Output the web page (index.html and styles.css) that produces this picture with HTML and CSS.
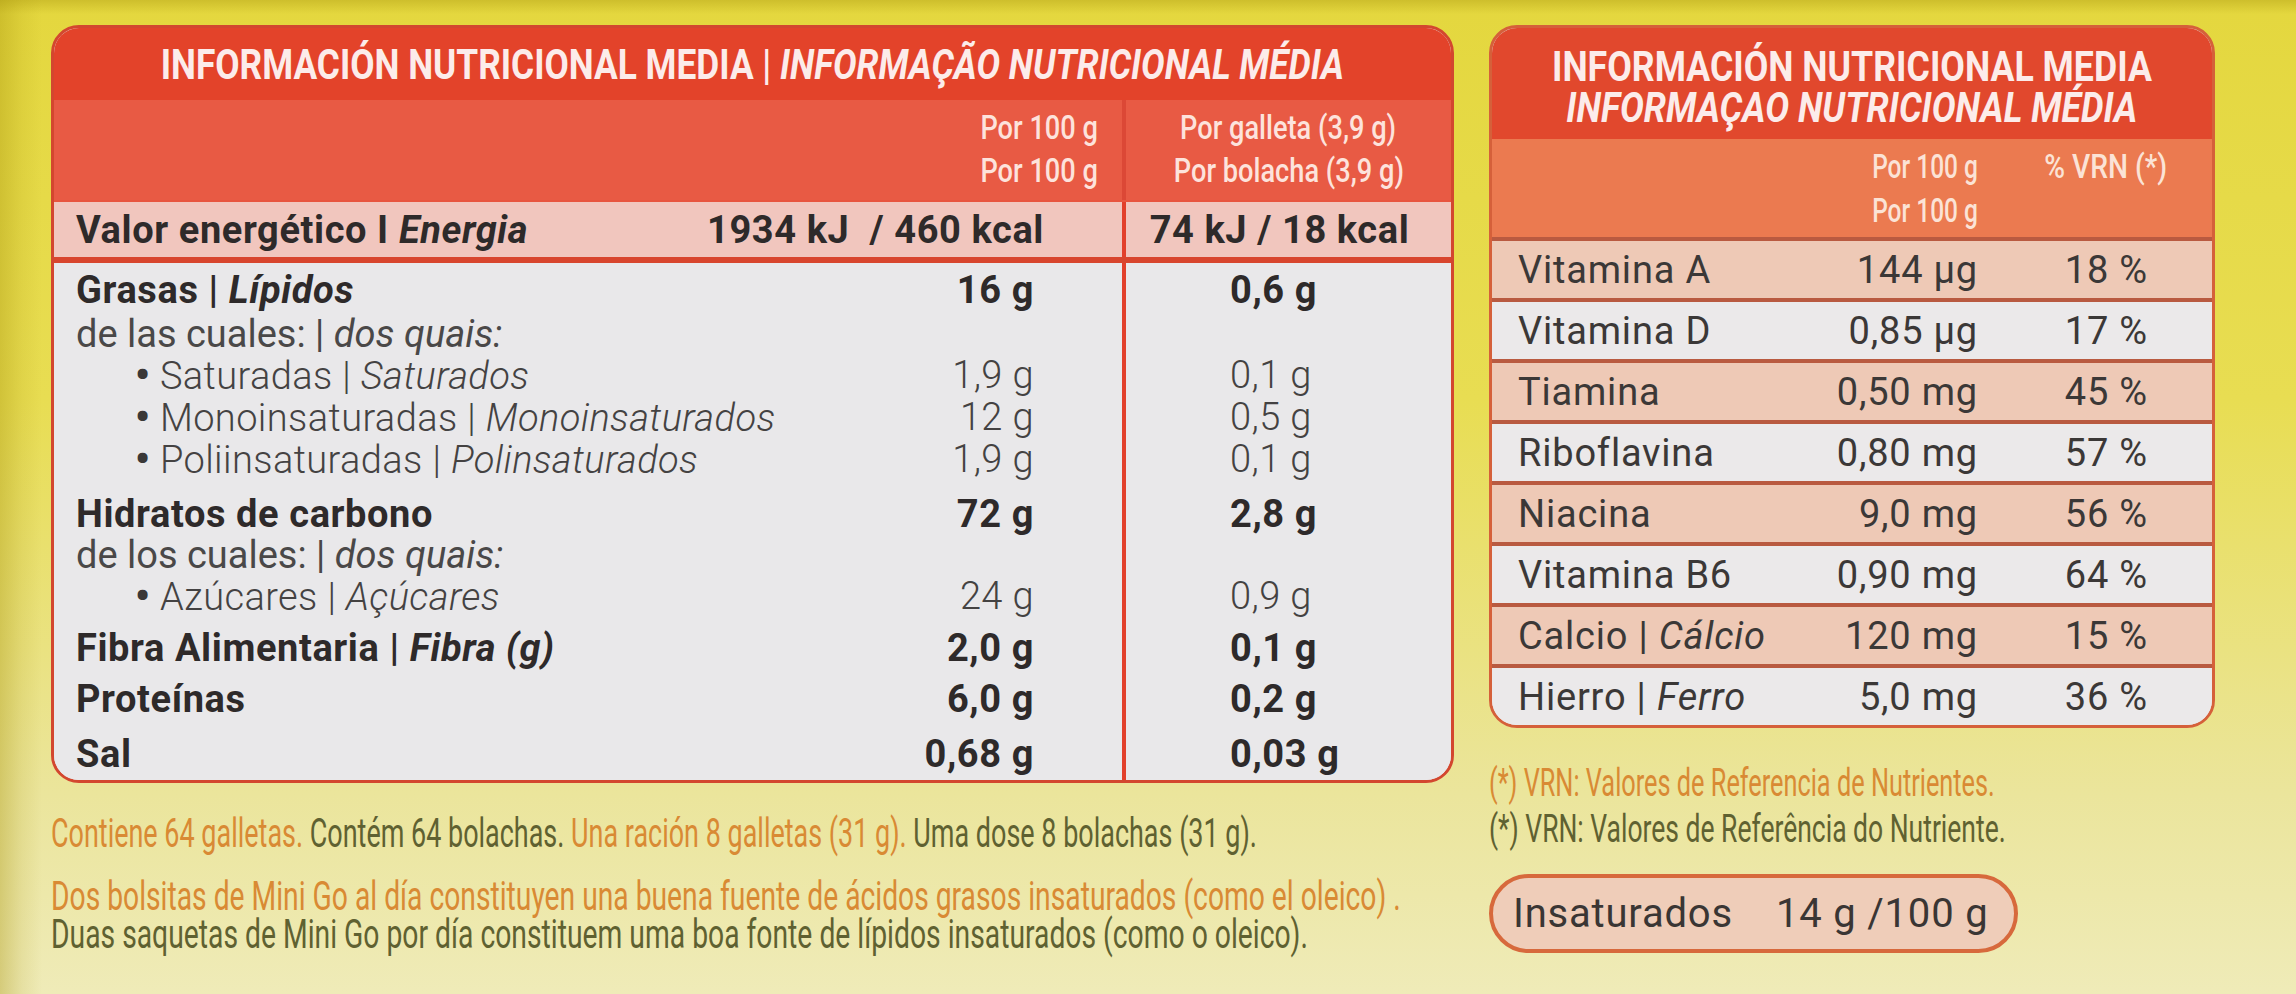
FILE: index.html
```html
<!DOCTYPE html>
<html lang="es">
<head>
<meta charset="utf-8">
<title>Información nutricional</title>
<link rel="stylesheet" href="styles.css">
</head>
<body>
<div class="pack">
  <div class="col-left">
    <section class="lt">
      <div class="lt-title"><span class="ttl">INFORMACIÓN NUTRICIONAL MEDIA | <i>INFORMAÇÃO NUTRICIONAL MÉDIA</i></span></div>
      <div class="lt-head">
        <div class="lh1">
          <div class="hl"><span>Por 100 g</span></div>
          <div class="hl"><span>Por 100 g</span></div>
        </div>
        <div class="lh2">
          <div class="hl"><span>Por galleta (3,9 g)</span></div>
          <div class="hl"><span>Por bolacha (3,9 g)</span></div>
        </div>
      </div>
      <div class="lt-energy">
        <div class="e1"><span>Valor energético I <i>Energia</i></span><span>1934 kJ &nbsp;/ 460 kcal</span></div>
        <div class="e2">74 kJ / 18 kcal</div>
      </div>
      <div class="lt-body">
        <div class="r b"><span class="l">Grasas | <i>Lípidos</i></span><span class="v1">16 g</span><span></span><span class="v2">0,6 g</span></div>
        <div class="r s p3"><span class="l">de las cuales: | <i>dos quais:</i></span></div>
        <div class="r t"><span class="l"><span class="bu">•</span> Saturadas | <i>Saturados</i></span><span class="v1">1,9 g</span><span></span><span class="v2">0,1 g</span></div>
        <div class="r t"><span class="l"><span class="bu">•</span> Monoinsaturadas | <i>Monoinsaturados</i></span><span class="v1">12 g</span><span></span><span class="v2">0,5 g</span></div>
        <div class="r t"><span class="l"><span class="bu">•</span> Poliinsaturadas | <i>Polinsaturados</i></span><span class="v1">1,9 g</span><span></span><span class="v2">0,1 g</span></div>
        <div class="r b p13"><span class="l">Hidratos de carbono</span><span class="v1">72 g</span><span></span><span class="v2">2,8 g</span></div>
        <div class="r s"><span class="l">de los cuales: | <i>dos quais:</i></span></div>
        <div class="r t"><span class="l"><span class="bu">•</span> Azúcares | <i>Açúcares</i></span><span class="v1">24 g</span><span></span><span class="v2">0,9 g</span></div>
        <div class="r b p10"><span class="l">Fibra Alimentaria | <i>Fibra (g)</i></span><span class="v1">2,0 g</span><span></span><span class="v2">0,1 g</span></div>
        <div class="r b p10"><span class="l">Proteínas</span><span class="v1">6,0 g</span><span></span><span class="v2">0,2 g</span></div>
        <div class="r b p14"><span class="l">Sal</span><span class="v1">0,68 g</span><span></span><span class="v2">0,03 g</span></div>
      </div>
    </section>
    <div class="notes">
      <div class="nl n1"><span class="nx"><span class="or">Contiene 64 galletas.</span> <span class="ol">Contém 64 bolachas.</span> <span class="or">Una ración 8 galletas (31 g).</span> <span class="ol">Uma dose 8 bolachas (31 g).</span></span></div>
      <div class="nl n2"><span class="nx"><span class="or">Dos bolsitas de Mini Go al día constituyen una buena fuente de ácidos grasos insaturados (como el oleico) .</span></span></div>
      <div class="nl n3"><span class="nx"><span class="ol">Duas saquetas de Mini Go por día constituem uma boa fonte de lípidos insaturados (como o oleico).</span></span></div>
    </div>
  </div>

  <div class="col-right">
    <section class="rt">
      <div class="rt-title">
        <div><span>INFORMACIÓN NUTRICIONAL MEDIA</span></div>
        <div><span><i>INFORMAÇAO NUTRICIONAL MÉDIA</i></span></div>
      </div>
      <div class="rt-head">
        <div></div>
        <div class="rh">
          <div class="hl"><span>Por 100 g</span></div>
          <div class="hl"><span>Por 100 g</span></div>
        </div>
        <div class="rh rh2">
          <div class="hl"><span>% VRN (*)</span></div>
        </div>
      </div>
      <div class="rr pk"><span class="n">Vitamina A</span><span class="v">144 µg</span><span class="p">18 %</span></div>
      <div class="rr wh"><span class="n">Vitamina D</span><span class="v">0,85 µg</span><span class="p">17 %</span></div>
      <div class="rr pk"><span class="n">Tiamina</span><span class="v">0,50 mg</span><span class="p">45 %</span></div>
      <div class="rr wh"><span class="n">Riboflavina</span><span class="v">0,80 mg</span><span class="p">57 %</span></div>
      <div class="rr pk"><span class="n">Niacina</span><span class="v">9,0 mg</span><span class="p">56 %</span></div>
      <div class="rr wh"><span class="n">Vitamina B6</span><span class="v">0,90 mg</span><span class="p">64 %</span></div>
      <div class="rr pk"><span class="n">Calcio | <i>Cálcio</i></span><span class="v">120 mg</span><span class="p">15 %</span></div>
      <div class="rr wh"><span class="n">Hierro | <i>Ferro</i></span><span class="v">5,0 mg</span><span class="p">36 %</span></div>
    </section>
    <div class="fn">
      <div class="f1"><span class="or">(*) VRN: Valores de Referencia de Nutrientes.</span></div>
      <div class="f2"><span class="ol">(*) VRN: Valores de Referência do Nutriente.</span></div>
    </div>
    <div class="pill"><span class="k">Insaturados</span><span>14 g /100 g</span></div>
  </div>
</div>
</body>
</html>
```

FILE: styles.css
```css
* { box-sizing: border-box; margin: 0; padding: 0; }
html, body { width: 2296px; height: 994px; overflow: hidden; }
body {
  font-family: Roboto, "Liberation Sans", sans-serif;
  background:
    linear-gradient(to right, rgba(165, 145, 10, 0.35) 0, rgba(165, 145, 10, 0.12) 22px, rgba(165, 145, 10, 0) 42px),
    linear-gradient(to bottom, rgba(165, 145, 10, 0.35) 0, rgba(165, 145, 10, 0) 14px),
    linear-gradient(to bottom, #e4d73e 0%, #e8dd52 40%, #ebe59c 80%, #efebb8 100%);
}
i { font-style: italic; }

.pack { display: flex; gap: 35px; padding: 25px 0 0 51px; }
.col-left { width: 1403px; }
.col-right { width: 726px; }

/* ---------- left table ---------- */
.lt {
  border: 3px solid #d3472f;
  border-radius: 28px;
  overflow: hidden;
  background: #e9e8ea;
}
.lt-title {
  height: 72px;
  background: #e3432a;
  display: flex;
  align-items: center;
  justify-content: center;
  padding-top: 2px;
}
.ttl {
  display: inline-block;
  font-weight: 700;
  font-size: 42px;
  line-height: 1;
  color: #fcecea;
  white-space: nowrap;
  transform: scaleX(0.84);
}
.lt-head {
  height: 100px;
  padding-top: 6px;
  display: grid;
  grid-template-columns: 1068px 1fr;
  background:
    linear-gradient(to right, transparent 1068px, #dc4836 1068px, #dc4836 1072px, transparent 1072px),
    #e85a44;
}
.hl { height: 43px; line-height: 43px; white-space: nowrap; }
.hl span {
  display: inline-block;
  font-size: 34px;
  font-weight: 500;
  color: #fde3dc;
  transform: scaleX(0.8);
}
.lh1 { text-align: right; padding-right: 24px; }
.lh1 .hl span { transform-origin: right center; }
.lh2 { text-align: center; padding-left: 4px; }
.lh2 .hl span { transform-origin: center center; }

.lt-energy {
  height: 63px;
  border-top: 2px solid #e8553f;
  border-bottom: 6px solid #d8452e;
  display: grid;
  grid-template-columns: 1068px 1fr;
  align-items: center;
  font-size: 38px;
  letter-spacing: 0.6px;
  font-weight: 700;
  color: #2e2a2a;
  white-space: nowrap;
  background:
    linear-gradient(to right, transparent 1068px, #e2402c 1068px, #e2402c 1072px, transparent 1072px),
    #f1c6be;
}
.e1 { display: flex; justify-content: space-between; padding: 0 78px 0 22px; }
.e2 { text-align: center; padding: 0 14px 0 0; }

.lt-body {
  padding: 7px 0 5px;
  background:
    linear-gradient(to right, transparent 1068px, #e2402c 1068px, #e2402c 1072px, transparent 1072px),
    #e9e8ea;
}
.r {
  display: grid;
  grid-template-columns: 780px 200px 92px 1fr;
  line-height: 41px;
  font-size: 38px;
  white-space: nowrap;
}
.r .l { padding-left: 22px; }
.r .v1 { text-align: right; }
.r .v2 { padding-left: 104px; }
.b { font-weight: 700; color: #2e2a2a; letter-spacing: 0.6px; }
.s { font-weight: 400; color: #4a4848; }
.t { font-weight: 300; color: #444242; letter-spacing: 0.4px; }
.t .l { padding-left: 81px; }
.bu { font-weight: 900; font-size: 40px; color: #3a3838; }
.p3 { padding-top: 3px; }
.p10 { padding-top: 10px; }
.p13 { padding-top: 13px; }
.p14 { padding-top: 14px; }

/* ---------- notes ---------- */
.notes { margin-top: 29px; font-size: 40px; }
.nl { white-space: nowrap; }
.nx { display: inline-block; transform-origin: left center; }
.n1 { line-height: 44px; }
.n1 .nx { transform: scaleX(0.674); }
.n2 { line-height: 40px; margin-top: 21px; }
.n2 .nx { transform: scaleX(0.706); }
.n3 { line-height: 36px; }
.n3 .nx { transform: scaleX(0.707); }
.or { color: #d98a34; }
.ol { color: #5f6131; }

/* ---------- right table ---------- */
.rt {
  border: 3px solid #d5603a;
  border-radius: 28px;
  overflow: hidden;
  background: #ebe9ea;
}
.rt-title {
  height: 111px;
  padding-top: 18px;
  background: #e1482d;
  text-align: center;
}
.rt-title div { height: 41px; line-height: 41px; white-space: nowrap; }
.rt-title span {
  display: inline-block;
  font-weight: 700;
  font-size: 42px;
  color: #fcecea;
  transform: scaleX(0.85);
}
.rt-head {
  height: 98px;
  padding-top: 5px;
  background: #eb7a50;
  display: grid;
  grid-template-columns: 296px 190px 189px;
}
.rh { text-align: right; }
.rh .hl { height: 44px; line-height: 44px; }
.rh .hl span { transform-origin: right center; transform: scaleX(0.72); color: #fbe3d6; }
.rh2 .hl span { transform: scaleX(0.83); }

.rr {
  display: grid;
  grid-template-columns: 296px 190px 170px;
  height: 61px;
  border-top: 4px solid #b95a40;
  align-items: center;
  font-size: 38px;
  letter-spacing: 0.8px;
  color: #3b3837;
  white-space: nowrap;
}
.rr .n { padding-left: 26px; }
.rr .v, .rr .p { text-align: right; }
.pk { background: #eec9b6; }
.wh { background: #ebe9ea; }

.fn { margin-top: 32px; }
.fn div { height: 46px; line-height: 46px; white-space: nowrap; }
.fn span { display: inline-block; font-size: 38px; transform-origin: left center; }
.f1 span { transform: scaleX(0.666); }
.f2 span { transform: scaleX(0.697); }

.pill {
  margin-top: 22px;
  width: 529px;
  height: 79px;
  border: 4px solid #d7693c;
  border-radius: 40px;
  background: #efcdb9;
  display: flex;
  align-items: center;
  padding-left: 20px;
  font-size: 40px;
  letter-spacing: 0.8px;
  color: #3a3634;
  white-space: nowrap;
}
.pill .k { width: 263px; }
```
